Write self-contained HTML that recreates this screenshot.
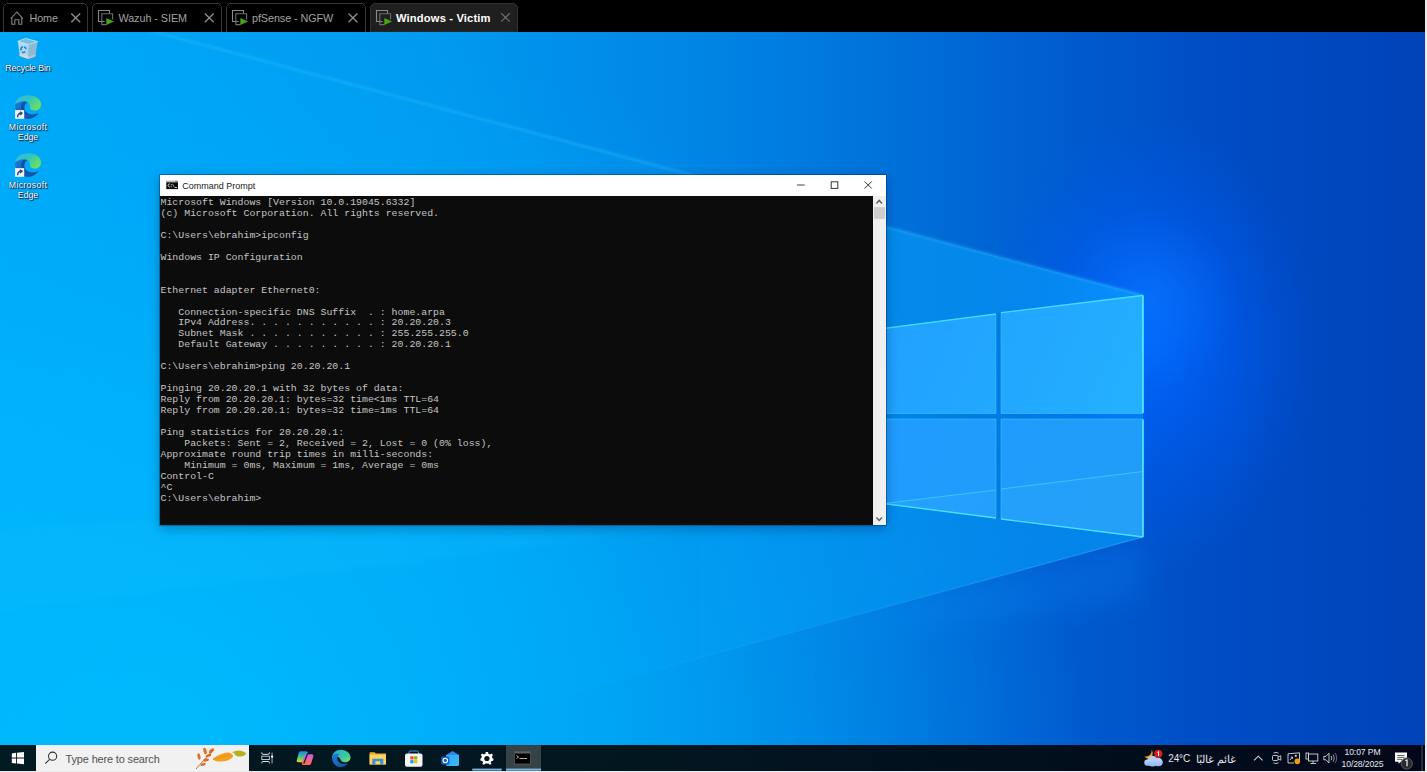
<!DOCTYPE html>
<html><head><meta charset="utf-8"><style>
html,body{margin:0;padding:0;width:1427px;height:772px;overflow:hidden;background:#ececec;font-family:"Liberation Sans",sans-serif}
.abs{position:absolute}
#tabs{position:absolute;left:0;top:0;width:1425px;height:32px;background:#000}
.tab{position:absolute;top:3px;height:29px;border:1px solid #3a3a3a;border-bottom:none;border-radius:6px 6px 0 0;background:#000;box-sizing:border-box}
.tab .t{position:absolute;top:9px;font-size:12px;color:#b4b4b4;white-space:nowrap;line-height:14px}
.tab.act{background:#1f1f1f}
.tab.act .t{color:#fff;font-weight:bold}
#desk{position:absolute;left:0;top:32px;width:1425px;height:713px;overflow:hidden}
#taskbar{position:absolute;left:0;top:745px;width:1425px;height:26px;background:#021820}
#cmd{position:absolute;left:160px;top:175px;width:726px;height:350px;background:#0c0c0c;box-shadow:0 0 0 1px rgba(0,30,70,.35),0 3px 11px rgba(0,10,50,.32)}
#cmd .title{position:absolute;left:0;top:0;width:726px;height:21px;background:#fff}
.con{position:absolute;left:0.5px;top:23px;margin:0;font-family:"Liberation Mono",monospace;font-size:9.88px;line-height:10.95px;color:#c4c4c4;white-space:pre}
.lbl{position:absolute;color:#fff;font-size:8px;text-align:center;text-shadow:1px 1px 1px rgba(0,0,30,.9),0 0 1.5px rgba(0,0,30,.6);line-height:10px}
</style></head><body>
<div id="tabs">
<svg width="1425" height="32" style="position:absolute;left:0;top:0">
  <g fill="none" stroke="#383838" stroke-width="1">
    <path d="M3.5,32 V6.5 L6.5,3.5 H84.5 L87.5,6.5 V32"/>
    <path d="M92.5,32 V6.5 L95.5,3.5 H218.5 L221.5,6.5 V32"/>
    <path d="M226.5,32 V6.5 L229.5,3.5 H362.5 L365.5,6.5 V32"/>
  </g>
  <path d="M370.5,32 V6.5 L373.5,3.5 H514.5 L517.5,6.5 V32 Z" fill="#1f1f1f" stroke="#303030" stroke-width="1"/>
  <!-- home icon -->
  <path d="M10.8,18.6 L16.8,12 L22.8,18.6 M11.8,17.6 V24.3 H14.8 V19.8 H18.8 V24.3 H21.8 V17.6" fill="none" stroke="#858585" stroke-width="1.1" stroke-linejoin="miter"/>
  <!-- vm icons -->
  <g id="vm">
    <path d="M104.5,21.5 H98.5 V10.5 H109.5 V13.5" fill="none" stroke="#8a8a8a" stroke-width="1.1"/>
    <path d="M106.5,24.6 H101.8 V13.8 H112.6 V19.5" fill="none" stroke="#6e6e6e" stroke-width="1.1"/>
    <path d="M106.3,18 L114,21.4 L106.3,24.9 Z" fill="#4aa414"/>
  </g>
  <use href="#vm" x="134"/>
  <use href="#vm" x="278"/>
  <!-- close x -->
  <g stroke="#8e8e8e" stroke-width="1.3" fill="none">
    <path d="M71.3,13.5 L80.2,22.2 M80.2,13.5 L71.3,22.2"/>
    <path d="M204.8,13.5 L213.7,22.2 M213.7,13.5 L204.8,22.2"/>
    <path d="M348.5,13.5 L357.4,22.2 M357.4,13.5 L348.5,22.2"/>
  </g>
  <path d="M501.2,13.2 L509.8,21.6 M509.8,13.2 L501.2,21.6" stroke="#6c6c6c" stroke-width="1.3" fill="none"/>
  <g font-family="Liberation Sans" font-size="10.8" fill="#a2a2a2">
    <text x="29.6" y="21.9" letter-spacing="-0.15">Home</text>
    <text x="118.4" y="21.9" letter-spacing="-0.05">Wazuh - SIEM</text>
    <text x="252" y="21.9" letter-spacing="-0.08">pfSense - NGFW</text>
  </g>
  <text x="396" y="21.9" font-family="Liberation Sans" font-size="11.2" font-weight="bold" fill="#ffffff" letter-spacing="0.15">Windows - Victim</text>
</svg>
</div>
<div id="desk">
<svg width="1425" height="713" viewBox="0 32 1425 713" style="position:absolute;left:0;top:0">
  <defs>
    <linearGradient id="bg" gradientUnits="userSpaceOnUse" x1="0" y1="400" x2="1425" y2="400">
      <stop offset="0" stop-color="#00a8f8"/>
      <stop offset="0.3" stop-color="#009af0"/>
      <stop offset="0.5" stop-color="#0084e4"/>
      <stop offset="0.62" stop-color="#0072da"/>
      <stop offset="0.72" stop-color="#0060d2"/>
      <stop offset="0.84" stop-color="#004ec6"/>
      <stop offset="1" stop-color="#0042b8"/>
    </linearGradient>
    <radialGradient id="cyan" gradientUnits="userSpaceOnUse" cx="150" cy="760" r="850" gradientTransform="translate(150 760) scale(1.1 0.9) translate(-150 -760)">
      <stop offset="0" stop-color="#00c0ff" stop-opacity="0.8"/>
      <stop offset="0.5" stop-color="#00b8ff" stop-opacity="0.55"/>
      <stop offset="1" stop-color="#00a8f8" stop-opacity="0"/>
    </radialGradient>
    <linearGradient id="beam" gradientUnits="userSpaceOnUse" x1="0" y1="400" x2="1143" y2="400">
      <stop offset="0" stop-color="#00b8ff" stop-opacity="0.06"/>
      <stop offset="0.55" stop-color="#00b0ff" stop-opacity="0.12"/>
      <stop offset="0.8" stop-color="#00a8ff" stop-opacity="0.3"/>
      <stop offset="1" stop-color="#00a0ff" stop-opacity="0.45"/>
    </linearGradient>
    <radialGradient id="glow" gradientUnits="userSpaceOnUse" cx="1148" cy="345" r="230" gradientTransform="translate(1148 345) scale(0.75 1.0) translate(-1148 -345)">
      <stop offset="0" stop-color="#0068ff" stop-opacity="0.9"/>
      <stop offset="0.5" stop-color="#0060ff" stop-opacity="0.45"/>
      <stop offset="1" stop-color="#0058f0" stop-opacity="0"/>
    </radialGradient>
    <linearGradient id="beamU" gradientUnits="userSpaceOnUse" x1="700" y1="300" x2="1143" y2="300">
      <stop offset="0" stop-color="#10a8ff" stop-opacity="0.1"/>
      <stop offset="0.5" stop-color="#10a8ff" stop-opacity="0.25"/>
      <stop offset="1" stop-color="#10a8ff" stop-opacity="0.35"/>
    </linearGradient>
    <linearGradient id="lbl" gradientUnits="userSpaceOnUse" x1="1143" y1="537" x2="500" y2="712">
      <stop offset="0" stop-color="#60d8ff" stop-opacity="0.35"/>
      <stop offset="0.5" stop-color="#60d8ff" stop-opacity="0.12"/>
      <stop offset="1" stop-color="#60d8ff" stop-opacity="0"/>
    </linearGradient>
    <filter id="blur1" x="-5%" y="-5%" width="110%" height="110%"><feGaussianBlur stdDeviation="1"/></filter>
    <filter id="blur3" x="-10%" y="-30%" width="120%" height="160%"><feGaussianBlur stdDeviation="2.5"/></filter>
    <filter id="blur12" x="-50%" y="-50%" width="200%" height="200%"><feGaussianBlur stdDeviation="14"/></filter>
    <radialGradient id="glow2">
      <stop offset="0" stop-color="#0a78ff" stop-opacity="0.6"/>
      <stop offset="1" stop-color="#0a70ff" stop-opacity="0"/>
    </radialGradient>
    <linearGradient id="paneU" gradientUnits="userSpaceOnUse" x1="886" y1="300" x2="1143" y2="410">
      <stop offset="0" stop-color="#20a0ff"/>
      <stop offset="1" stop-color="#24b0ff"/>
    </linearGradient>
    <linearGradient id="paneL" gradientUnits="userSpaceOnUse" x1="886" y1="419" x2="1143" y2="537">
      <stop offset="0" stop-color="#209cff"/>
      <stop offset="1" stop-color="#209cf8"/>
    </linearGradient>
  </defs>
  <rect x="0" y="32" width="1425" height="713" fill="url(#bg)"/>
  <rect x="0" y="32" width="1425" height="713" fill="url(#cyan)"/>
  <rect x="0" y="32" width="1425" height="713" fill="url(#glow)"/>
  <circle cx="1150" cy="300" r="90" fill="url(#glow2)"/>
  <polygon points="1143,295 -10,-12 -10,850 1143,537" fill="url(#beam)"/>
  <polygon points="1143,295 700,177 700,352 1143,295" fill="url(#beamU)"/>
  <polygon points="1143,537 700,657 700,480 1143,537" fill="url(#beamU)" opacity="0.8"/>
  <polygon points="1143,540 800,640 1143,600" fill="#0a90ff" opacity="0.2" filter="url(#blur12)"/>
  <path d="M1143,295 L-10,-12" stroke="#40c8ff" stroke-opacity="0.3" stroke-width="2.5" filter="url(#blur1)"/>
  <path d="M1143,537 L500,712" stroke="url(#lbl)" stroke-width="1.2"/>
  <polygon points="886,470 886,505 -10,612 -10,530" fill="#40d8ff" opacity="0.06" filter="url(#blur3)"/>
  <g stroke="#48d8ff" stroke-width="1" stroke-opacity="0.45">
    <polygon points="700,352 996,314 996,413.5 700,413.5" fill="url(#paneU)"/>
    <polygon points="1001,312.7 1143,295 1143,413.5 1001,413.5" fill="url(#paneU)"/>
    <polygon points="700,419 996,419 996,518 700,480" fill="url(#paneL)"/>
    <polygon points="1001,419 1143,419 1143,537 1001,519" fill="url(#paneL)"/>
  </g>
  <g stroke="#58f4ff" stroke-width="1.6" stroke-opacity="0.9" fill="none">
    <path d="M1143,295.5 V413 M1143,419.5 V537"/>
    <path d="M1001,312.7 L1143,295.5 M700,352 L996,314" stroke-opacity="0.6" stroke-width="1.3"/>
    <path d="M1001,519 L1143,537 M700,480 L996,518" stroke-opacity="0.75" stroke-width="1.4"/>
  </g>
  <polygon points="880,504 996,490 996,518 880,504" fill="#40c0ff" opacity="0.12"/>
  <polygon points="1001,489 1143,471.5 1143,537 1001,519" fill="#40c0ff" opacity="0.12"/>
  <path d="M880,504 L996,490 M1001,489 L1143,471.5" stroke="#50e0ff" stroke-opacity="0.55" stroke-width="1"/>
</svg>
</div>
<svg width="60" height="180" style="position:absolute;left:0;top:30px" id="deskicons">
  <defs>
    <linearGradient id="binG" x1="0" y1="0" x2="1" y2="1">
      <stop offset="0" stop-color="#d8f0fb"/><stop offset="0.6" stop-color="#a9d6ef"/><stop offset="1" stop-color="#88bde0"/>
    </linearGradient>
    <linearGradient id="edgeTop" x1="0" y1="0" x2="1" y2="0.6">
      <stop offset="0" stop-color="#3ab8e8"/><stop offset="0.5" stop-color="#30c4c0"/><stop offset="1" stop-color="#6ce060"/>
    </linearGradient>
    <linearGradient id="edgeBot" x1="0" y1="0" x2="0.6" y2="1">
      <stop offset="0" stop-color="#1c80dc"/><stop offset="1" stop-color="#1250a8"/>
    </linearGradient>
    <g id="edgeIco">
      <path d="M15.1,12 C15.1,19.5 20,25.8 27.5,25.8 C32,25.8 36.5,23.5 38.8,20 C36,21 33,21.6 30.5,21.3 C27,20.8 24.5,18.5 24.3,15.5 C24.1,12.5 25.5,10 27.5,9 C26.5,8.4 25.5,8.2 24.5,8.2 C19.5,8.2 15.5,10 15.1,12 Z" fill="url(#edgeBot)"/>
      <path d="M24.5,8.2 C21.5,9.5 20.5,13 21.3,16 C22.2,19.5 25.5,21.5 30.5,21.3 C27,20.8 24.5,18.5 24.3,15.5 C24.1,12.5 25.5,10 27.5,9 C26.5,8.4 25.5,8.2 24.5,8.2 Z" fill="#0a3f8c" opacity="0.6"/>
      <path d="M15.1,12 C15.5,6 21,2.3 28,2.3 C36,2.3 41,6.5 41,11.5 C41,15.5 38,17.5 34.5,17.5 C32,17.5 30.2,16.5 30,14.5 C30,11.5 28.8,9.6 27.5,9 C26.5,8.4 25.5,8.2 24.5,8.2 C19.5,8.2 15.5,10 15.1,12 Z" fill="url(#edgeTop)"/>
      <rect x="15.1" y="17.1" width="9.1" height="8.7" fill="#f2f2f2"/>
      <path d="M17.6,24.2 C17.6,21.5 18.8,20.2 21.3,20.2 M19.8,18.8 L22,20.2 L20.2,22" stroke="#2a4f8a" stroke-width="1.5" fill="none"/>
    </g>
  </defs>
  <!-- recycle bin -->
  <g transform="translate(0,-30)">
    <polygon points="17.8,41.3 28.9,44.5 28.5,59 19.8,56.1" fill="#b2d8f0"/>
    <polygon points="28.9,44.5 37.7,41.6 35.4,56.5 28.5,59" fill="#8ebad6"/>
    <polygon points="17.8,41.3 25.6,38.4 37.7,41.6 28.9,44.5" fill="#74bde6" stroke="#c8e8f8" stroke-width="0.8"/>
    <polygon points="19.5,54 28.6,56.6 28.5,59 19.8,56.1" fill="#dcd8d6"/>
    <polygon points="28.6,56.6 35.7,54.2 35.4,56.5 28.5,59" fill="#c4c2c4"/>
    <g stroke="#1e80e0" stroke-width="1.5" fill="none">
      <path d="M21.2,50.5 C20.6,48.8 21.4,47.2 23,46.6"/>
      <path d="M24.2,46.8 C25.5,47.2 26,48.3 25.9,49.3"/>
      <path d="M25.3,51.6 C24.4,52.6 22.9,52.6 21.9,51.8"/>
    </g>
  </g>
  <use href="#edgeIco" y="63"/>
  <use href="#edgeIco" y="121"/>
</svg>
<div class="lbl" style="left:0;top:63px;width:56px;font-size:8.7px;letter-spacing:-0.05px">Recycle Bin</div>
<div class="lbl" style="left:0;top:122px;width:56px;font-size:8.7px"><span style="letter-spacing:0.35px">Microsoft</span><br><span style="letter-spacing:0px">Edge</span></div>
<div class="lbl" style="left:0;top:180px;width:56px;font-size:8.7px"><span style="letter-spacing:0.35px">Microsoft</span><br><span style="letter-spacing:0px">Edge</span></div>
<div id="cmd">
  <svg width="726" height="350" style="position:absolute;left:0;top:0">
    <rect x="0" y="0" width="726" height="21" fill="#ffffff"/>
    <rect x="713" y="21" width="13" height="329" fill="#f0f0f0"/>
    <rect x="714" y="32.2" width="11" height="11.7" fill="#cdcdcd"/>
    <path d="M716.4,28.4 L719.2,25.4 L722,28.4" fill="none" stroke="#606060" stroke-width="1.4"/>
    <path d="M716.4,342.4 L719.2,345.4 L722,342.4" fill="none" stroke="#606060" stroke-width="1.4"/>
    <!-- cmd icon -->
    <rect x="6.3" y="5.9" width="11.7" height="8.2" fill="#0a0a0a"/>
    <rect x="6.3" y="5.9" width="11.7" height="1.5" fill="#b8b8b8"/>
    <rect x="15.2" y="6.2" width="2.5" height="0.9" fill="#606060"/>
    <path d="M10.2,9.3 C9.6,8.7 8.2,8.8 8.1,10.4 C8.1,12 9.6,12.2 10.2,11.6" stroke="#e8e8e8" stroke-width="0.9" fill="none"/>
    <rect x="11.1" y="9.4" width="0.9" height="0.9" fill="#e8e8e8"/><rect x="11.1" y="11.4" width="0.9" height="0.9" fill="#e8e8e8"/>
    <path d="M12.6,8.9 L14.3,12.3" stroke="#d0d0d0" stroke-width="0.7"/>
    <rect x="14.8" y="12" width="2.2" height="0.9" fill="#e8e8e8"/>
    <text x="22.3" y="13.6" font-family="Liberation Sans" font-size="9" fill="#1a1a1a">Command Prompt</text>
    <!-- buttons -->
    <rect x="637" y="9.5" width="7.7" height="1" fill="#444"/>
    <rect x="671.2" y="6.8" width="6.6" height="6.6" fill="none" stroke="#333" stroke-width="1"/>
    <path d="M704.6,6.4 L711.8,13.6 M711.8,6.4 L704.6,13.6" stroke="#333" stroke-width="1" fill="none"/>
  </svg>
<pre class="con">Microsoft Windows [Version 10.0.19045.6332]
(c) Microsoft Corporation. All rights reserved.

C:\Users\ebrahim>ipconfig

Windows IP Configuration


Ethernet adapter Ethernet0:

   Connection-specific DNS Suffix  . : home.arpa
   IPv4 Address. . . . . . . . . . . : 20.20.20.3
   Subnet Mask . . . . . . . . . . . : 255.255.255.0
   Default Gateway . . . . . . . . . : 20.20.20.1

C:\Users\ebrahim>ping 20.20.20.1

Pinging 20.20.20.1 with 32 bytes of data:
Reply from 20.20.20.1: bytes=32 time&lt;1ms TTL=64
Reply from 20.20.20.1: bytes=32 time=1ms TTL=64

Ping statistics for 20.20.20.1:
    Packets: Sent = 2, Received = 2, Lost = 0 (0% loss),
Approximate round trip times in milli-seconds:
    Minimum = 0ms, Maximum = 1ms, Average = 0ms
Control-C
^C
C:\Users\ebrahim&gt;</pre>
</div>
<div id="taskbar">
<svg width="1425" height="26" viewBox="0 745 1425 26" style="position:absolute;left:0;top:0">
  <defs>
    <linearGradient id="tb" gradientUnits="userSpaceOnUse" x1="0" y1="0" x2="1425" y2="0">
      <stop offset="0" stop-color="#021a22"/>
      <stop offset="0.45" stop-color="#021620"/>
      <stop offset="1" stop-color="#02081a"/>
    </linearGradient>
    <linearGradient id="cop1" x1="0" y1="0" x2="0" y2="1">
      <stop offset="0" stop-color="#2a7cf0"/><stop offset="0.5" stop-color="#38c890"/><stop offset="1" stop-color="#f0d020"/>
    </linearGradient>
    <linearGradient id="cop2" x1="0" y1="0" x2="0" y2="1">
      <stop offset="0" stop-color="#c060e0"/><stop offset="0.5" stop-color="#f060a0"/><stop offset="1" stop-color="#ff7030"/>
    </linearGradient>
    <linearGradient id="eT" x1="0" y1="0" x2="1" y2="1">
      <stop offset="0" stop-color="#2aa8d8"/><stop offset="0.6" stop-color="#38c8a0"/><stop offset="1" stop-color="#80e060"/>
    </linearGradient>
    <linearGradient id="eB" x1="0" y1="0" x2="1" y2="1">
      <stop offset="0" stop-color="#1a80d8"/><stop offset="1" stop-color="#1050a8"/>
    </linearGradient>
    <linearGradient id="olk" x1="0" y1="0" x2="1" y2="1">
      <stop offset="0" stop-color="#5070e8"/><stop offset="0.5" stop-color="#2090f0"/><stop offset="1" stop-color="#40c8f8"/>
    </linearGradient>
  </defs>
  <rect x="0" y="745" width="1425" height="26" fill="url(#tb)"/>
  <!-- start logo -->
  <g fill="#ffffff">
    <polygon points="11.8,753.4 16,752.8 16,757.6 11.8,757.6"/>
    <polygon points="16.9,752.7 24,751.9 24,757.6 16.9,757.6"/>
    <polygon points="11.8,758.5 16,758.5 16,763.5 11.8,763"/>
    <polygon points="16.9,758.5 24,758.5 24,764.3 16.9,763.6"/>
  </g>
  <!-- search box -->
  <rect x="36" y="745" width="213" height="26" fill="#f1f1f1"/>
  <circle cx="52.6" cy="756.2" r="4.1" fill="none" stroke="#303030" stroke-width="1.05"/>
  <path d="M49.6,759.3 L45.2,763.6" stroke="#303030" stroke-width="1.1"/>
  <text x="65.6" y="763.2" font-family="Liberation Sans" font-size="10.9" fill="#505050" letter-spacing="-0.12">Type here to search</text>
  <!-- leaves -->
  <g>
    <path d="M196,769 C201,763 207,757 214,749" stroke="#b0502a" stroke-width="0.8" fill="none"/>
    <ellipse cx="205" cy="751" rx="1.6" ry="3.4" fill="#e07020" transform="rotate(-15 205 751)"/>
    <ellipse cx="211.5" cy="750.8" rx="1.6" ry="3.2" fill="#e06818" transform="rotate(45 211.5 750.8)"/>
    <ellipse cx="199" cy="756.5" rx="1.5" ry="3.2" fill="#e07020" transform="rotate(-10 199 756.5)"/>
    <ellipse cx="208.5" cy="755.5" rx="1.4" ry="3" fill="#e06a1a" transform="rotate(75 208.5 755.5)"/>
    <ellipse cx="206" cy="760" rx="1.4" ry="3" fill="#e06a1a" transform="rotate(80 206 760)"/>
    <ellipse cx="203" cy="764.5" rx="1.3" ry="2.8" fill="#e06a1a" transform="rotate(80 203 764.5)"/>
    <path d="M212.5,759 C216,756 222,753 228,752.5 C232,753 234,755 232.5,757.5 C230,760 224,762 218,761.5 C215,761 213.5,760 212.5,759Z" fill="#f4a020"/>
    <path d="M213,759.3 L230,755" stroke="#d08010" stroke-width="0.5"/>
    <path d="M233.5,752 C236,750 242,749.5 246.5,754 C243,757 238,757.5 235,755 Z" fill="#b8b020"/>
    <path d="M232,752 L236,753" stroke="#a0a030" stroke-width="0.5"/>
  </g>
  <!-- task view -->
  <g fill="none" stroke="#dfe4e6" stroke-width="1">
    <path d="M261.8,752.4 V753.2 Q261.8,754.3 263,754.3 H268.2 Q269.4,754.3 269.4,753.2 V752.4"/>
    <rect x="261.8" y="756.2" width="7.6" height="3.3" stroke="#b8c0c4"/>
    <path d="M261.8,763.4 V762.6 Q261.8,761.5 263,761.5 H268.2 Q269.4,761.5 269.4,762.6 V763.4"/>
  </g>
  <rect x="271.3" y="752.6" width="1.6" height="10.8" fill="#6a767c"/>
  <circle cx="272.1" cy="756.7" r="1.1" fill="#ffffff"/>
  <!-- copilot -->
  <path d="M300.5,751.3 H306 C307.6,751.3 308.3,752.3 307.8,753.8 L305.2,760.5 C304.6,762 303.6,762.3 302.3,762.3 H298.3 C296.9,762.3 296.4,761.3 296.9,760 L298.7,753 C299,752 299.6,751.3 300.5,751.3 Z" fill="url(#cop1)"/>
  <path d="M306.3,754.2 H311.5 C313,754.2 313.7,755.2 313.3,756.6 L311.3,763 C310.9,764.3 310.2,765.1 308.8,765.1 H303.5 C302.1,765.1 301.5,764.1 301.9,762.8 L304.5,755.8 C304.9,754.8 305.5,754.2 306.3,754.2 Z" fill="url(#cop2)"/>
  <path d="M307.6,753.5 L303.8,763.5" stroke="#021a22" stroke-width="1.2"/>
  <!-- edge -->
  <g>
    <path d="M332.2,758 C332.2,753 336,749.8 341,749.8 C346.5,749.8 350.5,753.5 350.5,757.5 C350.5,760.5 348,762.3 345,762.3 C342.5,762.3 341,761 340.5,759.5 C339.5,756 335,755.5 333,758 Z" fill="url(#eT)"/>
    <path d="M332.2,758 C332.2,754 337,752.5 339.5,754.5 C337,756 336.5,759.5 338.5,761.8 C340.5,764 344.5,764.5 348.5,763 C346.5,765.5 343.5,767 340.5,767 C335.5,767 332.2,763 332.2,758 Z" fill="url(#eB)"/>
  </g>
  <!-- explorer -->
  <path d="M369.6,752.2 H374.5 L376,753.6 H386 V764.4 H369.6 Z" fill="#e8b030"/>
  <rect x="369.6" y="754.6" width="16.4" height="9.8" fill="#ffd35c"/>
  <path d="M372.3,764.4 V758.8 H383.3 V764.4 H380.2 V761.2 H375.4 V764.4 Z" fill="#3a90e0"/>
  <!-- store -->
  <path d="M409,754.5 V752 C409,751.3 409.5,751 410,751 H417.5 C418,751 418.5,751.3 418.5,752 V754.5" fill="none" stroke="#30a0e0" stroke-width="1"/>
  <rect x="405" y="753.5" width="17.5" height="13.2" rx="2" fill="#f4f4f4"/>
  <rect x="410.3" y="756.3" width="3.2" height="3.2" fill="#f25022"/>
  <rect x="414.1" y="756.3" width="3.2" height="3.2" fill="#7fba00"/>
  <rect x="410.3" y="760.1" width="3.2" height="3.2" fill="#00a4ef"/>
  <rect x="414.1" y="760.1" width="3.2" height="3.2" fill="#ffb900"/>
  <!-- outlook -->
  <path d="M446,755 L452.5,751 L459,755 V764 C459,765.3 458.3,766 457,766 H447 C446.5,766 446,765.5 446,765 Z" fill="url(#olk)"/>
  <path d="M446,755 L459,755 L459,764 C459,765.3 458.3,766 457,766 H447 Z" fill="#38b8f8" opacity="0.8"/>
  <rect x="441.3" y="756.5" width="8" height="8" rx="1.2" fill="#1060c8"/>
  <circle cx="445.3" cy="760.5" r="2.2" fill="none" stroke="#fff" stroke-width="1.1"/>
  <!-- settings gear -->
  <g transform="translate(486.9,758.2)">
    <path d="M-1.2,-6.6 H1.2 L1.6,-4.8 L3.3,-4 L4.9,-5 L6.4,-3.3 L5.3,-1.8 L5.8,0 L7,0.6 L6.6,2.8 L4.9,3 L4,4.6 L4.9,6 L3,7 L1.6,5.6 H-1.6 L-3,7 L-4.9,6 L-4,4.6 L-4.9,3 L-6.6,2.8 L-7,0.6 L-5.8,0 L-5.3,-1.8 L-6.4,-3.3 L-4.9,-5 L-3.3,-4 L-1.6,-4.8 Z" fill="#ffffff" transform="scale(0.95)"/>
    <circle cx="0" cy="0.3" r="2.6" fill="#021820"/>
  </g>
  <rect x="472.3" y="768.6" width="29.4" height="2" fill="#78b4e0"/>
  <!-- cmd button -->
  <rect x="506" y="745" width="35" height="26" fill="#354349"/>
  <rect x="506" y="768.6" width="35" height="2" fill="#78b8e8"/>
  <rect x="514.3" y="751.7" width="16.3" height="12.3" fill="#000" stroke="#707070" stroke-width="0.6"/>
  <rect x="514.6" y="752" width="15.7" height="1.5" fill="#606060"/>
  <path d="M516.5,755.5 L518.5,757 L516.5,758.5 M519.5,758.5 H527" stroke="#e0e0e0" stroke-width="0.8" fill="none"/>

  <!-- tray: weather -->
  <defs><linearGradient id="cld" x1="0" y1="0" x2="0" y2="1"><stop offset="0" stop-color="#b8d4fa"/><stop offset="1" stop-color="#94b8f0"/></linearGradient></defs>
  <path d="M1151.6,749.8 C1153.5,752.5 1153,756.5 1150,758 C1148,759 1145.8,758.2 1144.4,756.4 C1147.5,757 1150.5,755.5 1151.3,752.8 C1151.6,751.8 1151.7,750.8 1151.6,749.8 Z" fill="#f0a020"/>
  <g fill="url(#cld)">
    <circle cx="1152.6" cy="761.2" r="5.4"/>
    <circle cx="1158.3" cy="762" r="4.2"/>
    <rect x="1144.3" y="759.6" width="18.3" height="6.1" rx="3"/>
  </g>
  <circle cx="1158.3" cy="753.8" r="4.1" fill="#d42020"/>
  <path d="M1157.6,752.4 L1158.6,751.6 V756" stroke="#fff" stroke-width="0.9" fill="none"/>
  <text x="1168.2" y="762.2" font-family="Liberation Sans" font-size="10" fill="#e8e8e8" letter-spacing="-0.1">24°C</text>
  <text x="1216.2" y="762.5" font-family="Liberation Sans" font-size="10.5" fill="#e0e0e0" text-anchor="middle">غائم غالبًا</text>
  <!-- chevron -->
  <path d="M1254,760.4 L1258.3,756.2 L1262.6,760.4" stroke="#d0d0d0" stroke-width="1.1" fill="none"/>
  <!-- meet now -->
  <g stroke="#d8d8d8" stroke-width="0.9" fill="none">
    <rect x="1272.5" y="755.5" width="5.5" height="5" rx="1"/>
    <path d="M1278,757 L1280.8,755.8 V760.2 L1278,759"/>
    <path d="M1273.5,753.2 C1275,752.3 1277,752.3 1278.5,753.2 M1273.5,762.8 C1275,763.7 1277,763.7 1278.5,762.8"/>
  </g>
  <!-- screen w dot -->
  <g stroke="#d8d8d8" stroke-width="0.9" fill="none">
    <path d="M1288,753.8 L1299.5,752.8 V761 M1288,753.8 V763 H1294"/>
    <path d="M1290,760 L1292.5,757 M1292.5,757 H1290.8 M1292.5,757 V758.8"/>
  </g>
  <circle cx="1295.8" cy="755.8" r="1.1" fill="#d8d8d8"/>
  <circle cx="1297.3" cy="761.4" r="2.8" fill="#f59a10"/>
  <!-- network -->
  <g stroke="#d8d8d8" stroke-width="0.9" fill="none">
    <rect x="1308.5" y="754" width="9.3" height="7"/>
    <path d="M1313,761 V763.2 M1310.5,763.5 H1316"/>
    <rect x="1306" y="753" width="2.5" height="6"/>
  </g>
  <!-- volume -->
  <g stroke="#d8d8d8" stroke-width="0.9" fill="none">
    <path d="M1323.8,756.3 H1326 L1329,753.2 V763 L1326,759.8 H1323.8 Z"/>
    <path d="M1331,756 C1332,757.2 1332,759 1331,760.2"/>
    <path d="M1333,754.5 C1334.6,756.5 1334.6,759.7 1333,761.7" stroke-opacity="0.8"/>
    <path d="M1335,753 C1337.2,755.8 1337.2,760.4 1335,763.2" stroke-opacity="0.5"/>
  </g>
  <text x="1362.5" y="755" font-family="Liberation Sans" font-size="8.6" fill="#e8e8e8" text-anchor="middle" letter-spacing="-0.1">10:07 PM</text>
  <text x="1362.5" y="767.3" font-family="Liberation Sans" font-size="8.6" fill="#e8e8e8" text-anchor="middle" letter-spacing="-0.12">10/28/2025</text>
  <!-- notifications -->
  <path d="M1395,752.4 H1407 V761.8 H1401 L1398.5,763.8 V761.8 H1395 Z" fill="#f6f6f6"/>
  <path d="M1397.2,755.5 H1404.4 M1397.2,757.4 H1404.4 M1397.2,759.4 H1402" stroke="#50505a" stroke-width="0.9"/>
  <circle cx="1406.7" cy="763.5" r="5.6" fill="#2a2a2e" stroke="#60606a" stroke-width="0.9"/>
  <path d="M1405.3,760.5 L1407,760 V766.2" stroke="#f0f0f0" stroke-width="1.2" fill="none"/>
  <rect x="1421" y="745" width="2" height="26" fill="#262d3a"/>
</svg>
</div>
</body></html>
